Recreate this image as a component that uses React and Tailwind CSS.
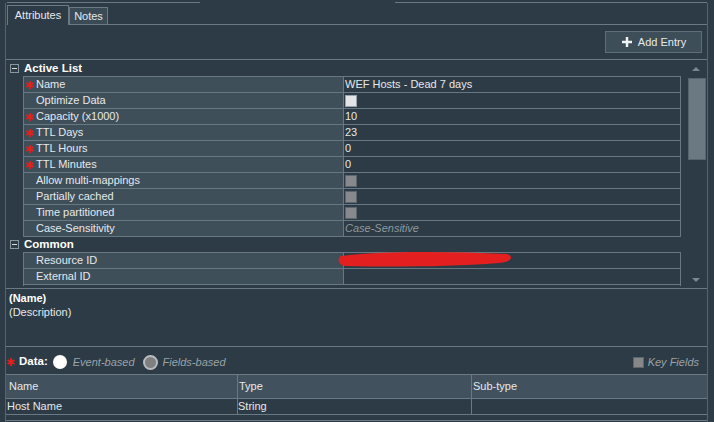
import React from 'react';

const Star = () => (
    <svg width="8" height="8" viewBox="0 0 8 8" className="shrink-0">
        <g stroke="#e3201c" strokeWidth="1.9" strokeLinecap="butt">
            <line x1="4" y1="0" x2="4" y2="8" />
            <line x1="0.5" y1="2" x2="7.5" y2="6" />
            <line x1="0.5" y1="6" x2="7.5" y2="2" />
        </g>
    </svg>
);

const Check = ({ light }) => (
    <span
        className={`block w-[12px] h-[12px] border ${light ? 'bg-[#e2e4e5] border-[#9aa4aa]' : 'bg-[#868a8c] border-[#5c666c]'}`}
    />
);

const activeRows = [
    { label: 'Name', req: true, value: 'WEF Hosts - Dead 7 days' },
    { label: 'Optimize Data', check: 'light' },
    { label: 'Capacity (x1000)', req: true, value: '10' },
    { label: 'TTL Days', req: true, value: '23' },
    { label: 'TTL Hours', req: true, value: '0' },
    { label: 'TTL Minutes', req: true, value: '0' },
    { label: 'Allow multi-mappings', check: 'dark' },
    { label: 'Partially cached', check: 'dark' },
    { label: 'Time partitioned', check: 'dark' },
    { label: 'Case-Sensitivity', hint: 'Case-Sensitive' },
];

const commonRows = [
    { label: 'Resource ID', redacted: true },
    { label: 'External ID' },
];

const Row = ({ row }) => (
    <div className="flex h-[16px] border-t border-[#687882]">
        <div className="w-[320px] shrink-0 bg-[#3e4f5a] border-r border-[#687882] flex items-center pl-[2px]">
            <span className="w-[10px] flex">{row.req && <Star />}</span>
            <span>{row.label}</span>
        </div>
        <div className="relative flex-1 flex items-center pl-[1px]">
            {row.value && <span>{row.value}</span>}
            {row.check && <Check light={row.check === 'light'} />}
            {row.hint && <span className="italic text-[#8f999f]">{row.hint}</span>}
            {row.redacted && (
                <svg className="absolute left-[-7px] top-[-3px]" width="178" height="20" viewBox="0 0 178 20">
                    <path
                        d="M4 6 C 40 1, 110 1, 170 4 C 177 6, 175 12, 162 13 C 110 17, 50 17, 8 16 C 1 15, 0 8, 4 6 Z"
                        fill="#e3201f"
                    />
                </svg>
            )}
        </div>
    </div>
);

const Section = ({ title, rows }) => (
    <>
        <div className="h-[15px] flex items-center">
            <span className="ml-[4px] w-[9px] h-[9px] border border-[#8b979e] flex items-center justify-center">
                <span className="block w-[5px] h-[1px] bg-[#d8dde0]" />
            </span>
            <span className="ml-[5px] font-bold text-[11.5px] text-white">{title}</span>
        </div>
        <div className="ml-[17px] w-[658px] border-x border-[#687882]">
            {rows.map((r) => (
                <Row key={r.label} row={r} />
            ))}
        </div>
    </>
);

const App = () => {
    return (
        <div
            className="w-[714px] h-[422px] overflow-hidden bg-[#2c3b45] text-[#e6e9eb] text-[11px] leading-none"
            style={{ fontFamily: '"Liberation Sans", Arial, sans-serif' }}
        >
            {/* top edge */}
            <div className="h-[3px] flex">
                <div className="ml-[7px] w-[193px] border-b border-[#6a7a84]" />
                <div className="w-[195px]" />
                <div className="w-[312px] border-b border-[#6a7a84]" />
            </div>

            <div className="ml-[5px] w-[703px] h-[419px] border-x border-[#55656f] flex flex-col">
                {/* tabs */}
                <div className="flex items-end h-[22px] pl-[1px] shrink-0">
                    <div className="h-[20px] w-[62px] border-x border-t border-[#6a7a84] flex items-center justify-center">
                        Attributes
                    </div>
                    <div className="h-[18px] w-[39px] bg-[#3a4b56] border border-[#6a7a84] flex items-center justify-center">
                        Notes
                    </div>
                    <div className="flex-1 border-b border-[#6a7a84]" />
                </div>

                {/* toolbar */}
                <div className="h-[35px] shrink-0 flex items-center justify-end pr-[5px] border-b border-[#6a7a84]">
                    <button className="h-[22px] w-[97px] bg-[#3d4e59] border border-[#5f6f79] flex items-center justify-center gap-[5px] text-[#e6e9eb]">
                        <svg width="12" height="12" viewBox="0 0 12 12">
                            <path d="M6 1v10M1 6h10" stroke="#f2f4f5" strokeWidth="2.4" />
                        </svg>
                        <span>Add Entry</span>
                    </button>
                </div>

                {/* property grid */}
                <div className="h-[229px] shrink-0 flex border-b border-[#6a7a84]">
                    <div className="w-[676px] pt-[1px]">
                        <Section title="Active List" rows={activeRows} />
                        <div className="ml-[17px] w-[658px] border-t border-[#687882]" />
                        <Section title="Common" rows={commonRows} />
                        <div className="ml-[17px] w-[658px] h-[2px] border-x border-t border-[#687882]" />
                    </div>
                    <div className="flex-1 flex flex-col items-center pt-[6px] pb-[5px]">
                        <svg width="10" height="5" viewBox="0 0 10 5" className="ml-[2px]">
                            <path d="M1 5 L5 1 L9 5 Z" fill="#7b8890" />
                        </svg>
                        <div className="mt-[7px] ml-[4px] w-[18px] h-[82px] bg-[#6b7a82] border border-[#56656e]" />
                        <div className="flex-1" />
                        <svg width="10" height="5" viewBox="0 0 10 5" className="ml-[2px]">
                            <path d="M1 0 L5 4 L9 0 Z" fill="#7b8890" />
                        </svg>
                    </div>
                </div>

                {/* description */}
                <div className="h-[58px] shrink-0 pl-[3px] pt-[4px] border-b border-[#6a7a84]">
                    <div className="font-bold text-white">(Name)</div>
                    <div className="mt-[3px]">(Description)</div>
                </div>

                {/* data type */}
                <div className="h-[27px] shrink-0 flex items-center pt-[3px] pl-[1px] pr-[8px]">
                    <Star />
                    <span className="ml-[4px] font-bold text-white text-[11.5px]">Data:</span>
                    <span className="ml-[5px] w-[14px] h-[14px] rounded-full bg-white" />
                    <span className="ml-[6px] italic text-[#9aa3a8]">Event-based</span>
                    <span className="ml-[8px] w-[15px] h-[15px] rounded-full bg-[#7d7f80] border-[2px] border-[#b8bcbf]" />
                    <span className="ml-[5px] italic text-[#9aa3a8]">Fields-based</span>
                    <div className="flex-1" />
                    <span className="w-[11px] h-[11px] bg-[#858789] border border-[#5c666c]" />
                    <span className="ml-[4px] italic text-[#9aa3a8]">Key Fields</span>
                </div>

                {/* fields table */}
                <div className="border-t border-[#6a7a84]">
                    <div className="flex h-[24px] bg-[#41525e] border-b border-[#6a7a84]">
                        <div className="w-[232px] border-r border-[#6a7a84] flex items-center pl-[3px]">Name</div>
                        <div className="w-[234px] border-r border-[#6a7a84] flex items-center pl-[1px]">Type</div>
                        <div className="flex-1 flex items-center pl-[1px]">Sub-type</div>
                    </div>
                    <div className="flex h-[16px] border-b border-[#6a7a84]">
                        <div className="w-[232px] border-r border-[#6a7a84] flex items-center pl-[1px]">Host Name</div>
                        <div className="w-[234px] border-r border-[#6a7a84] flex items-center">String</div>
                        <div className="flex-1" />
                    </div>
                    <div className="h-[6px] border-b border-[#6a7a84]" />
                </div>
            </div>
        </div>
    );
};

export default App;
